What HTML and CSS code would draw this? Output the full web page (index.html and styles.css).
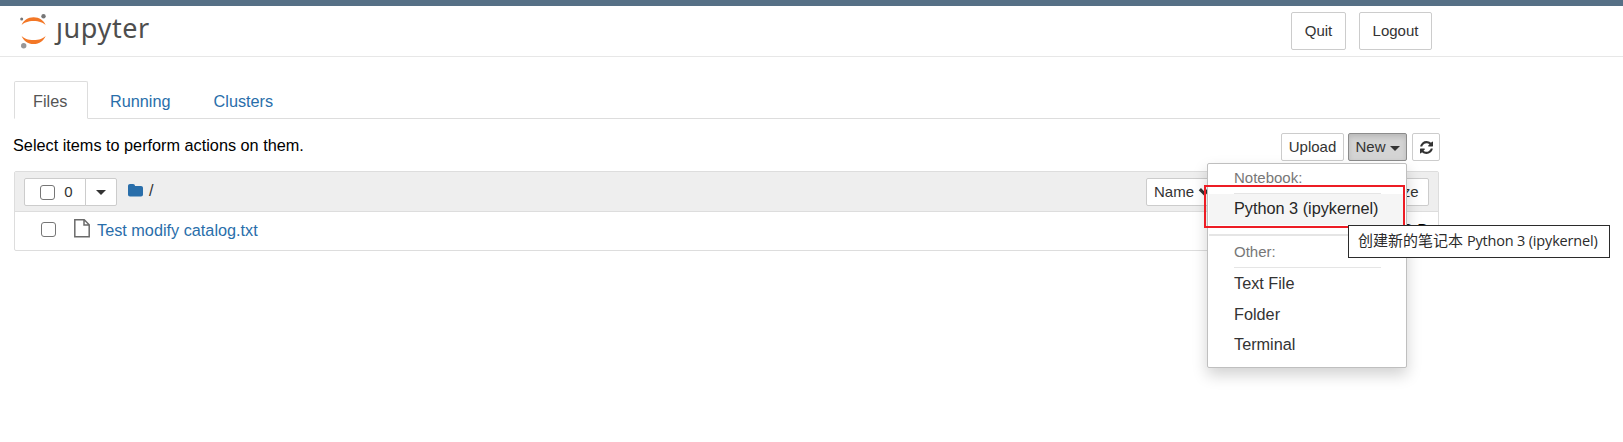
FILE: index.html
```
<!DOCTYPE html>
<html lang="en">
<head>
<meta charset="utf-8">
<title>Home Page - Select or create a notebook</title>
<link rel="stylesheet" href="styles.css">
</head>
<body>
<header class="header">
  <a class="logo">
    <svg class="logo-mark" width="30" height="38" viewBox="0 0 30 38">
      <path d="M2.6 13.2C4 8.6 9 5.2 14.6 5.2s10.600 3.400 12 8C24.600 10.600 20 8.900 14.600 8.900S4.600 10.600 2.600 13.200z" fill="#f37726"/>
      <path d="M2.600 23.700C4 28.600 9 32 14.600 32s10.600-3.400 12-8.300C24.600 26.300 20 28.100 14.600 28.100S4.600 26.300 2.600 23.700z" fill="#f37726"/>
      <circle cx="24.500" cy="4.300" r="2.200" fill="#767677"/>
      <circle cx="2.700" cy="6.900" r="1.500" fill="#767677"/>
      <circle cx="4.700" cy="33.800" r="2.700" fill="#989798"/>
    </svg>
    <span class="logo-word">ȷupyter</span>
  </a>
  <div class="session">
    <button class="btn btn-lg quit">Quit</button>
    <button class="btn btn-lg logout">Logout</button>
  </div>
</header>
<main class="content">
  <nav class="tabs">
    <a class="tab active">Files</a>
    <a class="tab running">Running</a>
    <a class="tab clusters">Clusters</a>
  </nav>
  <div class="toolbar">
    <span class="hint">Select items to perform actions on them.</span>
    <div class="actions">
      <button class="btn upload">Upload</button>
      <div class="new-group">
        <button class="btn new">New<i class="caret"></i></button>
        <div class="menu">
          <div class="menu-title">Notebook:</div>
          <div class="menu-item hover">Python 3 (ipykernel)</div>
          <div class="menu-divider"></div>
          <div class="menu-title">Other:</div>
          <div class="menu-item">Text File</div>
          <div class="menu-item">Folder</div>
          <div class="menu-item">Terminal</div>
        </div>
        <div class="highlight"></div>
        <div class="tooltip">创建新的笔记本 <span class="kernel">Python 3 (ipykernel)</span></div>
      </div>
      <button class="btn refresh">
        <svg width="13" height="13" viewBox="0 0 1536 1536"><path fill="#333" d="M1511 928q0 5-1 7-64 268-268 434.500T764 1536q-146 0-282.500-55T238 1324l-129 129q-19 19-45 19t-45-19-19-45V960q0-26 19-45t45-19h448q26 0 45 19t19 45-19 45l-137 137q71 66 161 102t187 36q134 0 250-65t186-179q11-17 53-117 8-23 30-23h192q13 0 22.500 9.500t9.500 22.500zM1536 128v448q0 26-19 45t-45 19h-448q-26 0-45-19t-19-45 19-45l138-138Q969 256 768 256q-134 0-250 65T332 500q-11 17-53 117-8 23-30 23H50q-13 0-22.500-9.500T18 608v-7q65-268 270-434.500T768 0q146 0 284 55.500T1297 212l130-129q19-19 45-19t45 19 19 45z"/></svg>
      </button>
    </div>
  </div>
  <section class="list">
    <div class="list-header">
      <div class="select-group">
        <button class="btn select-all"><i class="check"></i>0</button>
        <button class="btn select-menu"><i class="caret"></i></button>
      </div>
      <svg class="folder" width="15" height="13" viewBox="0 0 15 13"><path fill="#296eaa" d="M0 2C0 .8.800 0 2 0h3c1.200 0 2 .8 2 2h6c1.200 0 2 .8 2 2v6.600c0 1.200-.8 2-2 2H2c-1.200 0-2-.8-2-2z"/></svg>
      <span class="crumb">/</span>
      <div class="sorters">
        <button class="btn name">Name
          <svg width="14" height="10" viewBox="0 0 14 10"><path d="M2 2l5 5 5-5" fill="none" stroke="#333" stroke-width="3.400"/></svg>
        </button>
        <button class="btn size">File size</button>
      </div>
    </div>
    <div class="list-row">
      <i class="check"></i>
      <svg class="file" width="16" height="19" viewBox="0 0 16 19"><path d="M.8.800h9.400l5 5v12H.8zM10 1v5h5" fill="none" stroke="#6b6b6b" stroke-width="1.500"/></svg>
      <a class="filename">Test modify catalog.txt</a>
      <span class="filesize">0 B</span>
    </div>
  </section>
</main>
</body>
</html>
```
FILE: styles.css
```
* { box-sizing: border-box; }
body {
  margin: 0;
  border-top: 6px solid #567086;
  background: #fff;
  color: #000;
  font: 16.25px/20px "Liberation Sans", Arial, sans-serif;
  overflow: hidden;
  height: 442px;
}
.header {
  display: flex;
  justify-content: space-between;
  height: 51px;
  padding: 6px 191px 0 19px;
  border-bottom: 1px solid #e7e7e7;
}
.logo { display: flex; }
.logo-mark { flex: none; }
.logo-word {
  margin-left: 7px;
  font: 27px/32px "Noto Sans", sans-serif;
  letter-spacing: .6px;
  color: #4e4e4e;
}
.session { display: flex; gap: 13px; }
.btn {
  display: flex;
  align-items: center;
  justify-content: center;
  height: 28px;
  padding: 0;
  border: 1px solid #ccc;
  border-radius: 2px;
  background: #fff;
  color: #333;
  font: 15px/20px "Liberation Sans", Arial, sans-serif;
  white-space: nowrap;
}
.btn-lg { height: 38px; }
.quit { width: 55px; }
.logout { width: 73px; }
.content { width: 1440px; padding: 24px 0 0 14px; }
.tabs {
  display: flex;
  height: 38px;
  border-bottom: 1px solid #ddd;
}
.tab {
  height: 37px;
  line-height: 40px;
  color: #296eaa;
}
.tab.active {
  width: 74px;
  height: 38px;
  padding-left: 18px;
  border: 1px solid #ddd;
  border-bottom-color: #fff;
  border-radius: 2px 2px 0 0;
  line-height: 38px;
  color: #555;
}
.running { margin-left: 22px; }
.clusters { margin-left: 43px; }
.toolbar {
  display: flex;
  justify-content: space-between;
  height: 52px;
  padding-top: 14px;
}
.hint { margin-left: -1px; padding-top: 2px; }
.actions { display: flex; gap: 4px; }
.upload { width: 63px; }
.new-group { position: relative; margin-right: 1px; }
.new {
  width: 59px;
  border-color: #8c8c8c;
  background: #d4d4d4;
  box-shadow: inset 0 3px 5px rgba(0, 0, 0, .125);
}
.refresh { width: 28px; }
.caret {
  border: 5px solid transparent;
  border-top-color: #333;
  border-bottom: 0;
}
.new .caret { margin: 3px 0 0 4px; }
.menu {
  position: absolute;
  top: 30px;
  right: 0;
  z-index: 2;
  width: 200px;
  height: 205px;
  padding: 4px 1px 0;
  border: 1px solid #bfbfbf;
  border-radius: 2px;
  background: #fff;
  box-shadow: 0 7px 15px rgba(0, 0, 0, .18);
}
.menu-title {
  height: 26px;
  margin: 0 24px 0 25px;
  border-bottom: 1px solid #e5e5e5;
  font-size: 15px;
  color: #777;
}
.menu-item {
  height: 30.500px;
  padding-left: 25px;
  line-height: 30px;
  color: #333;
}
.menu-item.hover { height: 31px; background: #f5f5f5; color: #262626; line-height: 28px; }
.menu-divider { height: 2px; margin: 9px 0 6px; background: #e5e5e5; }
.highlight {
  position: absolute;
  top: 52px;
  left: -144px;
  z-index: 3;
  width: 201px;
  height: 43px;
  border: 2px solid #ed1c24;
}
.tooltip {
  position: absolute;
  top: 92px;
  left: 0;
  z-index: 3;
  width: 262px;
  height: 33px;
  padding-left: 9px;
  border: 1px solid #2b2b2b;
  background: #fff;
  color: #2b2b2b;
  font: 15px/29px "Open Sans", "Noto Sans CJK SC", sans-serif;
  white-space: nowrap;
}
.kernel { font-size: 14.500px; letter-spacing: -.18px; }
.list {
  width: 1425px;
  height: 80px;
  border: 1px solid #ddd;
  border-radius: 2px;
}
.list-header {
  display: flex;
  height: 40px;
  padding: 6px 9px 0;
  border-bottom: 1px solid #ddd;
  background: #eee;
}
.select-group { display: flex; }
.select-all { width: 62px; padding-left: 3px; border-radius: 2px 0 0 2px; }
.select-menu { width: 32px; margin-left: -1px; border-radius: 0 2px 2px 0; }
.check {
  width: 15px;
  height: 15px;
  border: 1.500px solid #767676;
  border-radius: 3px;
  background: #fff;
}
.select-all .check { margin-right: 9px; }
.folder { margin: 6px 6px 0 11px; }
.crumb { padding-top: 2px; color: #333; }
.sorters { display: flex; gap: 147px; margin-left: auto; }
.name { width: 66px; padding-left: 7px; gap: 4px; }
.size { width: 70px; padding-right: 6px; }
.list-row { display: flex; height: 39px; padding: 0 10px 0 26px; }
.list-row .check { margin-top: 10px; }
.file { margin: 7px 7px 0 18px; }
.filename { padding-top: 8px; color: #296eaa; }
.filesize { margin-left: auto; padding-top: 8px; }
```
